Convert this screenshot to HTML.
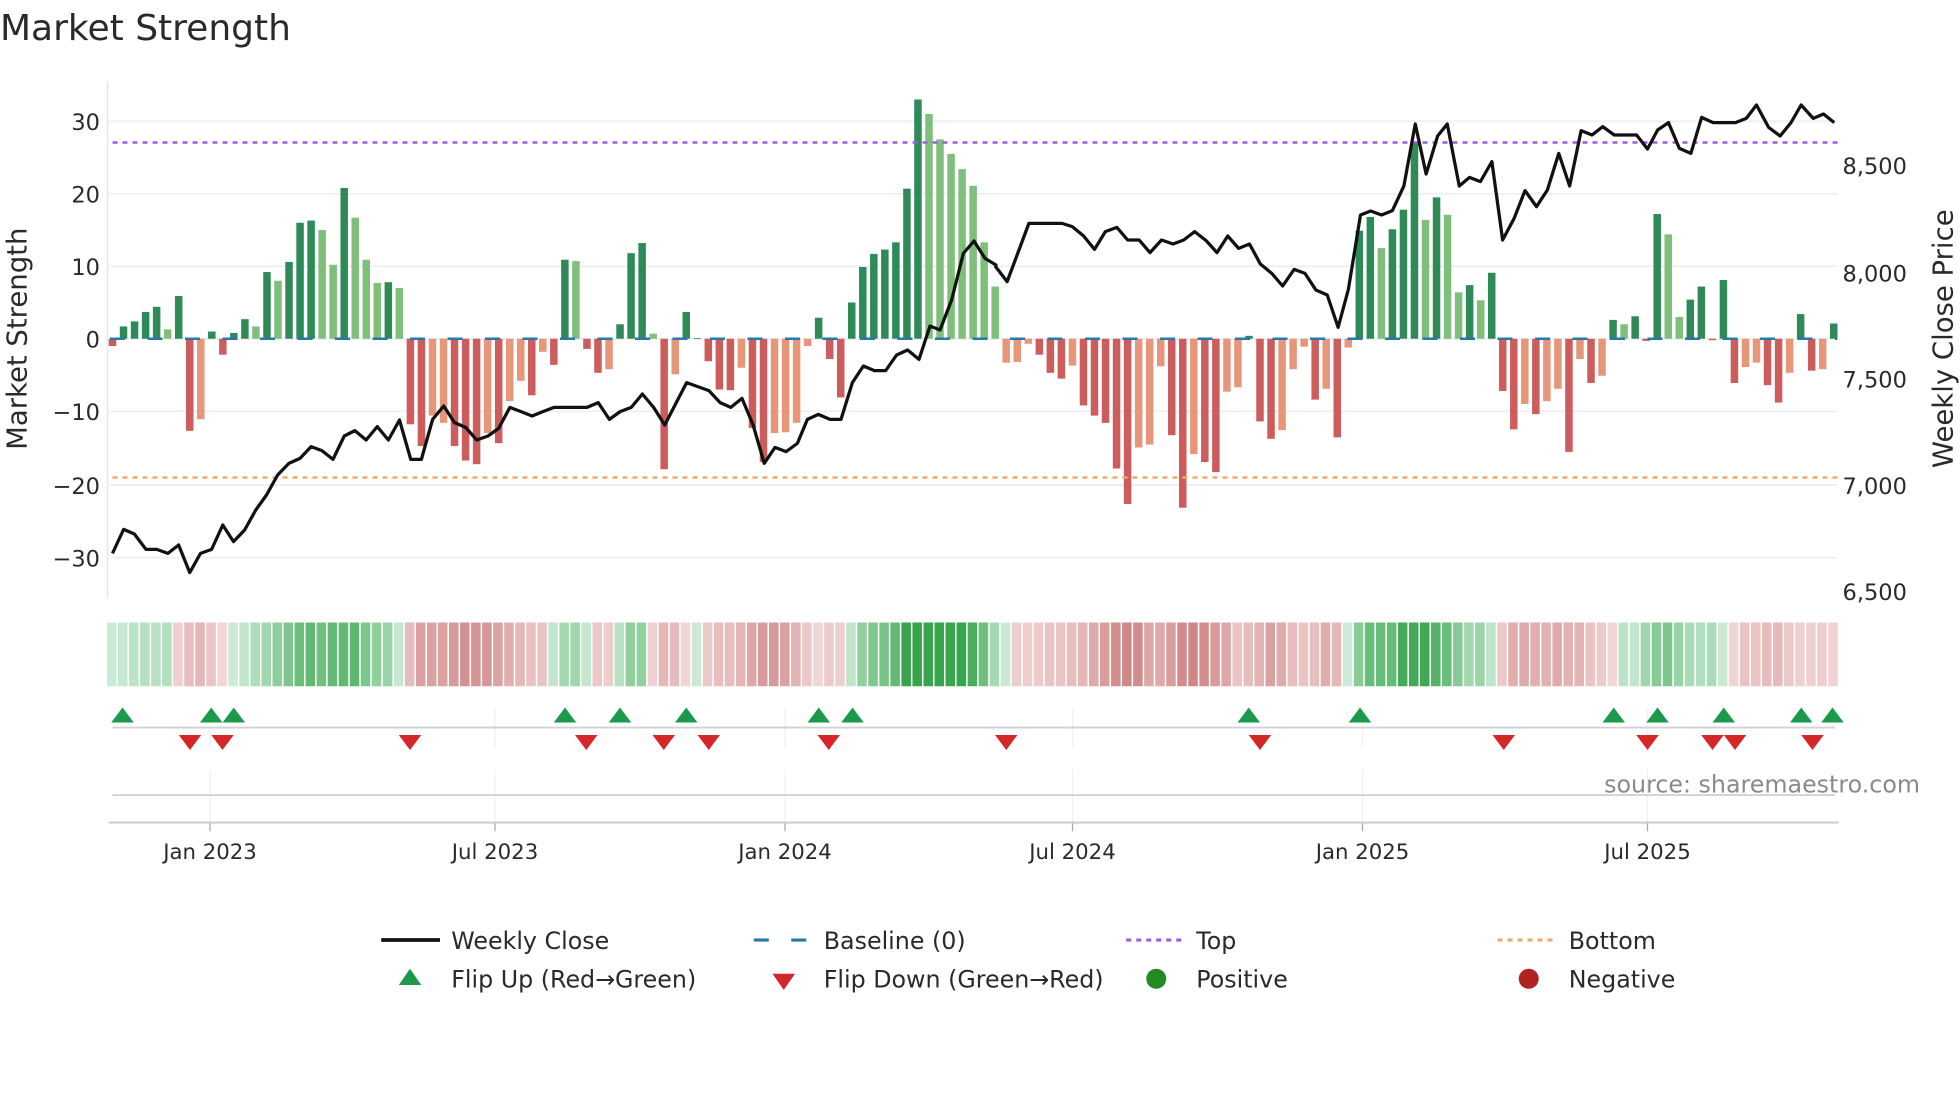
<!DOCTYPE html>
<html><head><meta charset="utf-8">
<style>
html,body{margin:0;padding:0;background:#fff;width:1960px;height:1102px;overflow:hidden}
svg{display:block}
text{font-family:"DejaVu Sans","Liberation Sans",sans-serif;fill:#2a2a2a}
</style></head>
<body>
<svg id="s" width="1960" height="1102" viewBox="0 0 1568 881.6" xmlns="http://www.w3.org/2000/svg">
<rect width="1568" height="882" fill="#fff"/>
<text x="0" y="32" font-size="28.8" fill="#333">Market Strength</text>
<g id="grid"></g>
<g id="bars"></g>
<g id="strip"></g>
<g id="marks"></g>
<line x1="90" y1="114" x2="1470" y2="114" stroke="#9b5de0" stroke-width="2" stroke-dasharray="4,4"/>
<line x1="90" y1="382" x2="1470" y2="382" stroke="#f0a868" stroke-width="2" stroke-dasharray="4,4"/>
<polyline id="price" fill="none" stroke="#111" stroke-width="2.6" stroke-linejoin="round"/>
<g font-size="18" text-anchor="end">
<text x="80" y="104">30</text><text x="80" y="162">20</text><text x="80" y="220">10</text>
<text x="80" y="278">0</text><text x="80" y="336">−10</text><text x="80" y="395">−20</text><text x="80" y="453">−30</text>
</g>
<g font-size="18">
<text x="1474" y="139">8,500</text><text x="1474" y="225">8,000</text><text x="1474" y="310">7,500</text>
<text x="1474" y="395">7,000</text><text x="1474" y="480">6,500</text>
</g>
<text font-size="22" transform="translate(21,271) rotate(-90)" text-anchor="middle">Market Strength</text>
<text font-size="22" transform="translate(1562,271) rotate(-90)" text-anchor="middle">Weekly Close Price</text>
<g font-size="17" text-anchor="middle">
<text x="168" y="687">Jan 2023</text><text x="396" y="687">Jul 2023</text><text x="628" y="687">Jan 2024</text>
<text x="858" y="687">Jul 2024</text><text x="1090" y="687">Jan 2025</text><text x="1318" y="687">Jul 2025</text>
</g>
<text x="1536" y="634" font-size="19" text-anchor="end" style="fill:#8a8a8a">source: sharemaestro.com</text>
<g font-size="19">
<line x1="305" y1="752" x2="352" y2="752" stroke="#111" stroke-width="3"/>
<text x="361" y="759">Weekly Close</text>
<line x1="603" y1="752" x2="647" y2="752" stroke="#2a77a8" stroke-width="2.5" stroke-dasharray="12,18"/>
<text x="659" y="759">Baseline (0)</text>
<line x1="901" y1="752" x2="945" y2="752" stroke="#9b5de0" stroke-width="2.5" stroke-dasharray="4,4"/>
<text x="957" y="759">Top</text>
<line x1="1198" y1="752" x2="1243" y2="752" stroke="#f0a868" stroke-width="2.5" stroke-dasharray="4,4"/>
<text x="1255" y="759">Bottom</text>
<polygon points="328,775 337,788 319,788" fill="#1a9a4a"/>
<text x="361" y="790">Flip Up (Red→Green)</text>
<polygon points="618,779 636,779 627,792" fill="#d62728"/>
<text x="659" y="790">Flip Down (Green→Red)</text>
<circle cx="925" cy="783" r="8" fill="#228b22"/>
<text x="957" y="790">Positive</text>
<circle cx="1223" cy="783" r="8" fill="#b22222"/>
<text x="1255" y="790">Negative</text>
</g>
</svg>
<script>
(function(){
var NS="http://www.w3.org/2000/svg";
function el(p,t,a){var e=document.createElementNS(NS,t);for(var k in a)e.setAttribute(k,a[k]);p.appendChild(e);return e;}
var B=[[-1,'R'],[1.7,'D'],[2.4,'D'],[3.7,'D'],[4.4,'D'],[1.3,'L'],[5.9,'D'],[-12.7,'R'],[-11.1,'O'],[1,'D'],[-2.2,'R'],[0.8,'D'],[2.7,'D'],[1.7,'L'],[9.2,'D'],[8,'L'],[10.6,'D'],[16,'D'],[16.3,'D'],[15,'L'],[10.2,'L'],[20.8,'D'],[16.7,'L'],[10.9,'L'],[7.7,'L'],[7.8,'D'],[7,'L'],
[-11.8,'R'],[-14.8,'R'],[-10.6,'O'],[-11.6,'O'],[-14.8,'R'],[-16.8,'R'],[-17.3,'R'],[-13,'O'],[-14.4,'R'],[-8.6,'O'],[-5.8,'O'],[-7.8,'R'],[-1.8,'O'],[-3.6,'R'],[10.9,'D'],[10.7,'L'],[-1.4,'R'],[-4.7,'R'],[-4.2,'O'],[2,'D'],[11.8,'D'],[13.2,'D'],[0.7,'L'],[-18,'R'],[-4.9,'O'],[3.7,'D'],[0.1,'D'],[-3.1,'R'],[-7,'R'],[-7.1,'R'],[-4,'O'],[-12.3,'R'],[-17,'R'],[-13,'O'],[-12.9,'O'],
[-11.6,'O'],[-1,'O'],[2.9,'D'],[-2.8,'R'],[-8.1,'R'],[5,'D'],[9.9,'D'],[11.7,'D'],[12.3,'D'],[13.3,'D'],[20.7,'D'],[33,'D'],[31,'L'],[27.5,'L'],[25.5,'L'],[23.4,'L'],[21.1,'L'],[13.3,'L'],[7.2,'L'],
[-3.3,'O'],[-3.2,'O'],[-0.7,'O'],[-2.2,'R'],[-4.7,'R'],[-5.5,'R'],[-3.7,'O'],[-9.2,'R'],[-10.6,'R'],[-11.6,'R'],[-17.9,'R'],[-22.8,'R'],[-15,'O'],[-14.6,'O'],[-3.8,'O'],[-13.3,'R'],[-23.3,'R'],[-15.9,'O'],[-17,'R'],[-18.4,'R'],[-7.3,'O'],[-6.7,'O'],[0.4,'D'],[-11.4,'R'],[-13.8,'R'],[-12.6,'O'],[-4.2,'O'],[-1.1,'O'],[-8.4,'R'],[-6.9,'O'],[-13.6,'R'],[-1.2,'O'],
[14.9,'D'],[16.8,'D'],[12.5,'L'],[15.1,'D'],[17.8,'D'],[27,'D'],[16.4,'L'],[19.5,'D'],[17.1,'L'],[6.4,'L'],[7.4,'D'],[5.3,'L'],[9.1,'D'],
[-7.2,'R'],[-12.5,'R'],[-9,'O'],[-10.4,'R'],[-8.6,'O'],[-6.9,'O'],[-15.6,'R'],[-2.8,'O'],[-6.1,'R'],[-5.1,'O'],[2.6,'D'],[2,'L'],[3.1,'D'],[-0.3,'R'],[17.2,'D'],[14.4,'L'],[3,'L'],[5.4,'D'],[7.2,'D'],[-0.2,'R'],[8.1,'D'],
[-6.1,'R'],[-3.9,'O'],[-3.3,'O'],[-6.4,'R'],[-8.8,'R'],[-4.7,'O'],[3.4,'D'],[-4.4,'R'],[-4.2,'O'],[2.1,'D']];
var n=B.length,x0=90,x1=1467,sp=(x1-x0)/(n-1),Z=271,U=5.8;
var col={D:'#2e8b57',L:'#7fbf7b',R:'#cd5c5c',O:'#e8967a'};
var bg=document.getElementById('bars'),g=document.getElementById('grid');
[97,155,213,271,329,388,446].forEach(function(y){el(g,'line',{x1:88,y1:y,x2:1470,y2:y,stroke:'#eceff3','stroke-width':1.5});});
el(g,'line',{x1:86,y1:65,x2:86,y2:478,stroke:'#e3e6ea','stroke-width':1.2});
for(var i=0;i<n;i++){var v=B[i][0],x=x0+i*sp,h=Math.abs(v)*U;
 el(bg,'rect',{x:x-3,y:v>=0?Z-h:Z,width:6,height:Math.max(h,0.5),fill:col[B[i][1]]});}
el(bg,'line',{x1:88,y1:Z,x2:1470,y2:Z,stroke:'#2a77a8','stroke-width':2,'stroke-dasharray':'12,18'});
var st=document.getElementById('strip');
for(var i=0;i<n;i++){var a=0,c=0;for(var j=i-1;j<=i+1;j++)if(j>=0&&j<n){a+=B[j][0];c++;}a/=c;
 var t=Math.min(Math.abs(a)/22,1),x=x0+i*sp,f;
 if(a>=0)f='rgb('+Math.round(205-150*t)+','+Math.round(235-70*t)+','+Math.round(215-140*t)+')';
 else f='rgb('+Math.round(242-40*t)+','+Math.round(215-95*t)+','+Math.round(215-95*t)+')';
 el(st,'rect',{x:x-sp/2,y:498,width:sp-1.2,height:51,fill:f});}
var m=document.getElementById('marks');
[168,396,628,858,1090,1318].forEach(function(x){
 el(m,'line',{x1:x,y1:567,x2:x,y2:598,stroke:'#eef0f3','stroke-width':1});
 el(m,'line',{x1:x,y1:616,x2:x,y2:658,stroke:'#eef0f3','stroke-width':1});
 el(m,'line',{x1:x,y1:658,x2:x,y2:665,stroke:'#aaa','stroke-width':1});});
el(m,'line',{x1:90,y1:582,x2:1468,y2:582,stroke:'#d0d2d5','stroke-width':1.5});
el(m,'line',{x1:90,y1:636,x2:1468,y2:636,stroke:'#d0d2d5','stroke-width':1.5});
el(m,'line',{x1:87,y1:658,x2:1471,y2:658,stroke:'#c8cacd','stroke-width':1.5});
[98,169,187,452,496,549,655,682,999,1088,1291,1326,1379,1441,1466].forEach(function(x){
 el(m,'polygon',{points:(x)+',566 '+(x+9)+',578 '+(x-9)+',578',fill:'#1a9a4a'});});
[152,178,328,469,531,567,663,805,1008,1203,1318,1370,1388,1450].forEach(function(x){
 el(m,'polygon',{points:(x-9)+',588 '+(x+9)+',588 '+x+',600',fill:'#d62728'});});
var P=[],z1=[[28,1420],[53,1348],[77,1362],[103,1408],[127,1408],[152,1420],[176,1395],[201,1478],[225,1420],[250,1408],[275,1335],[299,1385],[324,1350],[349,1290],[373,1245],[398,1185],[423,1150],[448,1135],[473,1100],[497,1112],[522,1138],[547,1068],[571,1052],[596,1080],[621,1040],[646,1080],[671,1020],[696,1138],[720,1138],[745,1018],[770,978],[794,1028],[819,1042],[844,1080],[869,1068],[893,1045],[918,982],[943,995],[968,1008],[992,995],[1017,982],[1042,982],[1066,982],[1091,982],[1116,968],[1141,1018],[1165,995],[1190,982],[1215,942],[1240,982],[1265,1035],[1290,970],[1314,908],[1339,920],[1364,932],[1389,968],[1413,982],[1438,955],[1463,1035],[1488,1150],[1512,1102],[1537,1115],[1562,1090]];
z1.forEach(function(p){P.push((80+p[0]/2.8).toFixed(1)+','+(64+p[1]/3.75).toFixed(1));});
var z3=[[622,1018],[655,1003],[690,1018],[723,1018],[757,908],[790,858],[823,872],[857,872],[890,825],[923,810],[957,838],[990,738],[1020,750],[1055,660],[1090,520],[1122,483],[1155,535],[1188,555]];
z3.forEach(function(p){P.push((480+p[0]/3.75).toFixed(1)+','+(64+p[1]/3.75).toFixed(1));});
var z2=[[150,560],[168,605],[185,518],[202,430],[220,430],[254,430],[270,440],[288,468],[305,508],[322,455],[340,442],[357,480],[375,480],[392,518],[410,480],[428,492],[445,480],[462,455],[480,482],[497,518],[514,468],[531,505],[548,492],[565,552],[583,580],[600,618],[618,568],[635,580],[652,630],[670,645],[687,742],[703,628],[722,405],[738,393],[755,405],[772,392],[790,318],[808,132],[825,282],[843,168],[858,132],[877,318],[893,292],[910,305],[928,245],[945,480],[963,415],[980,332],[998,380],[1015,330],[1033,220],[1050,318],[1068,152],[1085,165],[1102,140],[1120,165],[1155,165],[1172,207],[1188,150],[1205,128],[1222,205],[1240,220],[1257,112],[1275,128],[1310,128],[1327,115],[1343,75],[1362,142],[1380,168],[1397,128],[1413,75],[1432,115],[1448,102],[1465,128]];
z2.forEach(function(p){P.push((720+p[0]/1.96).toFixed(1)+','+(64+p[1]/3.75).toFixed(1));});
document.getElementById('price').setAttribute('points',P.join(' '));
})();
</script>
</body></html>
